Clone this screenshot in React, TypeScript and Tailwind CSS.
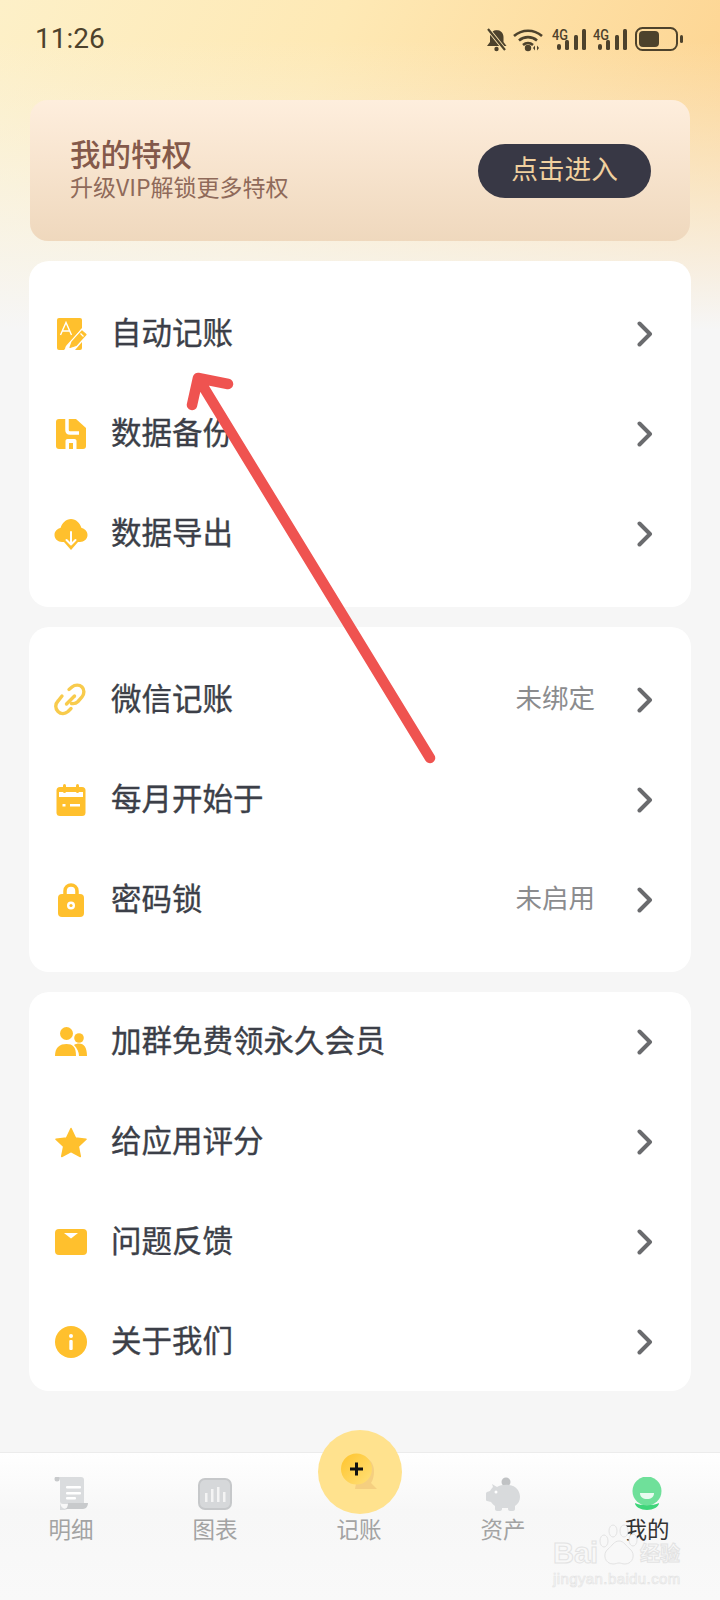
const Y = "#ffc02d";

function Chevron() {
  return (
    <svg width="16" height="26" viewBox="0 0 16 26" className="ml-[42px] mr-[2px] shrink-0">
      <path d="M2.500 2.500 L13 13 L2.500 23.500" fill="none" stroke="#6a6b6e" strokeWidth="4" strokeLinecap="round" strokeLinejoin="round" />
    </svg>
  );
}

const icons: Record<string, React.ReactNode> = {
  auto: (
    <svg width="34" height="34" viewBox="0 0 34 34">
      <path d="M5 1h21q2 0 2 2v8L10 33H5q-2 0-2-2V3q0-2 2-2z" fill={Y} />
      <path d="M21 33l7-8v6q0 2-2 2z" fill={Y} />
      <path d="M6.500 18 L12 5.500 L17.500 18 M8.500 14 h7" stroke="#fff" strokeWidth="1.400" fill="none" />
      <path d="M15.500 31 L30 15" stroke="#fff" strokeWidth="8" strokeLinecap="round" />
      <path d="M16 30.500 L18 25 L28 14 L32 17.500 L22 28.500 Z" fill={Y} stroke={Y} strokeWidth="1.200" strokeLinejoin="round" />
      <path d="M26.500 16.500l3 3" stroke="#fff" strokeWidth="1.200" />
    </svg>
  ),
  save: (
    <svg width="30" height="30" viewBox="0 0 30 30">
      <path d="M3 0h17l10 9v18c0 2-1 3-3 3H3c-2 0-3-1-3-3V3c0-2 1-3 3-3z" fill={Y} />
      <path d="M11 0v11c0 2 1 3 3 3h9" fill="none" stroke="#fff" strokeWidth="3.500" />
      <path d="M9.500 30v-8c0-1 .5-2 2-2h7c1.500 0 2 1 2 2v8z" fill="#fff" />
      <rect x="13" y="24" width="4" height="6" fill={Y} />
    </svg>
  ),
  cloud: (
    <svg width="34" height="32" viewBox="0 0 34 32">
      <path d="M8 24c-4 0-7.500-3-7.500-7s3-6.500 6-7C8 5 12 1 17 1s9 4 10.500 9c3 .5 6 3 6 7s-3.500 7-7.500 7z" fill={Y} />
      <path d="M17 32l-7-8h3V16h8v8h3z" fill={Y} />
      <path d="M17 14v12M12.500 22l4.500 4.500 4.500-4.500" stroke="#fff" strokeWidth="2" fill="none" strokeLinecap="round" strokeLinejoin="round" />
    </svg>
  ),
  link: (
    <svg width="34" height="34" viewBox="0 0 34 34" fill="none" stroke="#f8cb4c" strokeWidth="3.400" strokeLinecap="round">
      <path d="M15 6.500l3-2.500c3-2.500 7.500-2.500 10 0s2.500 7 0 10l-4 4.500c-2 2-4 2.500-6.500 2" />
      <path d="M8 13l-4 5c-3 3-3 7.500 0 10.500s7 2.500 10 0l3-3" />
      <path d="M12.500 21l8-8" />
    </svg>
  ),
  cal: (
    <svg width="30" height="32" viewBox="0 0 30 32">
      <rect x="0.500" y="3" width="29" height="29" rx="3.500" fill={Y} />
      <rect x="3" y="8" width="24" height="5" fill="#fff" />
      <rect x="7" y="0" width="3" height="9" rx="1.500" fill={Y} />
      <rect x="20" y="0" width="3" height="9" rx="1.500" fill={Y} />
      <rect x="6.500" y="20" width="3" height="2.500" fill="#fff" />
      <rect x="14" y="20" width="10" height="2.500" fill="#fff" />
    </svg>
  ),
  lock: (
    <svg width="28" height="34" viewBox="0 0 28 34">
      <path d="M8 13V8c0-8 12-8 12 0v5" fill="none" stroke={Y} strokeWidth="3.500" />
      <rect x="1" y="11" width="26" height="23" rx="4" fill={Y} />
      <circle cx="14" cy="22.500" r="4" fill="#fff" />
      <circle cx="14" cy="22.500" r="1.600" fill={Y} />
    </svg>
  ),
  group: (
    <svg width="32" height="30" viewBox="0 0 32 30">
      <circle cx="11.500" cy="6.500" r="6.500" fill={Y} />
      <circle cx="24" cy="11" r="4.800" fill={Y} />
      <path d="M0 29c0-9 5-12 11.500-12S21 20 21 29z" fill={Y} />
      <path d="M19 18c1.500-1 3-1.500 5-1.500 5 0 8 4 8 12.500h-8c0-4-2-8-5-11z" fill={Y} />
    </svg>
  ),
  star: (
    <svg width="32" height="31" viewBox="0 0 32 31">
      <path d="M16 1.500 L20.500 11 L31 12.300 L23.300 19.500 L25.300 29.500 L16 24.500 L6.700 29.500 L8.700 19.500 L1 12.300 L11.500 11 Z" fill={Y} stroke={Y} strokeWidth="1.500" strokeLinejoin="round" />
    </svg>
  ),
  mail: (
    <svg width="32" height="26" viewBox="0 0 32 26">
      <rect width="32" height="26" rx="4" fill={Y} />
      <path d="M9 4h14l-7 5.500z" fill="#fff" />
    </svg>
  ),
  info: (
    <svg width="32" height="32" viewBox="0 0 32 32">
      <circle cx="16" cy="16" r="16" fill={Y} />
      <circle cx="16" cy="10" r="2" fill="#fff" />
      <rect x="14.300" y="14" width="3.400" height="10" rx="1" fill="#fff" />
    </svg>
  ),
};

function Row({ icon, label, value }: { icon: string; label: string; value?: string }) {
  return (
    <div className="flex h-[100px] items-center pl-[25px] pr-[36px]">
      <div className="flex w-[34px] shrink-0 items-center justify-center">{icons[icon]}</div>
      <span className="ml-[23px] flex-1 pb-[6px] text-[30.500px] leading-none text-[#3c3f48] [-webkit-text-stroke:0.35px_#3c3f48]">{label}</span>
      {value && <span className="pb-[6px] text-[26.500px] leading-none text-[#8b8c8e]">{value}</span>}
      <Chevron />
    </div>
  );
}

function Card({ children, className }: { children: React.ReactNode; className: string }) {
  return <div className={"mx-[29px] rounded-[20px] bg-white " + className}>{children}</div>;
}

function NavItem({ label, icon, active }: { label: string; icon?: React.ReactNode; active?: boolean }) {
  return (
    <div className="flex w-[46px] flex-col items-center">
      <div className="flex h-[34px] items-center justify-center">{icon}</div>
      <span className={"mt-[2px] whitespace-nowrap text-[22.500px] leading-[30px] " + (active ? "text-[#333333]" : "text-[#a3a3a3]")}>{label}</span>
    </div>
  );
}

export default function App() {
  return (
    <div
      className="relative flex h-[1600px] w-[720px] flex-col overflow-hidden bg-[linear-gradient(to_bottom,transparent_40px,#f6f6f6_330px),linear-gradient(115deg,#fdf0c8_0%,#fee9b5_40%,#fdd08a_100%)] bg-[length:100%_100%,100%_330px] bg-no-repeat"
      style={{ fontFamily: '"Noto Sans CJK SC", "Noto Sans", sans-serif' }}
    >
      {/* status bar */}
      <div className="flex h-[78px] items-center justify-between pl-[35px] pr-[35px] text-[#4d422c]">
        <span className="text-[28px] leading-none" style={{ fontFamily: '"Roboto", sans-serif' }}>11:26</span>
        <svg width="200" height="28" viewBox="0 0 200 28" fill="#4d422c">
          <path d="M11.500 5c4 0 7 3 7 7v5l3 4H2l3-4v-5c0-4 3-7 7-7z" />
          <circle cx="11.500" cy="24" r="2.200" />
          <path d="M3 4l17 21" stroke="#fde6ae" strokeWidth="4" />
          <path d="M3 4l17 21" stroke="#4d422c" strokeWidth="2.200" />
          <g fill="none" stroke="#4d422c" strokeWidth="2.600">
            <path d="M29 11c8-7 20-7 28 0" />
            <path d="M34 15.500c5-4.500 13-4.500 18 0" />
            <path d="M38 20c3-2.500 7-2.500 10 0" />
          </g>
          <circle cx="43" cy="23" r="3.200" />
          <path d="M50 20.500l-2 2.500 2 2.500zM52 20.500l2 2.500-2 2.500z" />
          {[0, 41].map((dx) => (
            <g key={dx} transform={`translate(${dx} 0)`}>
              <rect x="72" y="19" width="4" height="6" rx="2" />
              <rect x="80" y="15" width="4" height="10" rx="1.500" />
              <rect x="89" y="10" width="4" height="15" rx="1.500" />
              <rect x="97" y="4" width="4" height="21" rx="1.500" />
              <text x="67" y="15" fontSize="14" fontWeight="500" fontFamily="Roboto, sans-serif" fill="#4d422c" textLength="16" lengthAdjust="spacingAndGlyphs">4G</text>
            </g>
          ))}
          <rect x="151" y="3" width="41" height="22" rx="6.500" fill="none" stroke="#4d422c" strokeWidth="2" />
          <rect x="154" y="6" width="20" height="16" rx="4" />
          <rect x="195" y="10" width="3" height="8" rx="1.500" />
        </svg>
      </div>

      {/* privilege banner */}
      <div className="mx-[30px] mt-[22px] flex h-[141px] items-center justify-between rounded-[18px] bg-[linear-gradient(to_bottom,#feeedd,#efd8bd)] pl-[40px] pr-[39px]">
        <div className="flex flex-col pb-[3px]">
          <span className="text-[30.500px] font-medium leading-[35px] text-[#84594a]">我的特权</span>
          <span className="text-[23px] leading-[31px] text-[#8f6a5a]">升级VIP解锁更多特权</span>
        </div>
        <div className="flex h-[54px] w-[173px] items-center justify-center rounded-full bg-[#383845] pb-[4px] text-[26.700px] leading-none text-[#f0d09f]">点击进入</div>
      </div>

      <Card className="mt-[20px] h-[346px] py-[23px]">
        <Row icon="auto" label="自动记账" />
        <Row icon="save" label="数据备份" />
        <Row icon="cloud" label="数据导出" />
      </Card>
      <Card className="mt-[20px] h-[345px] py-[23px]">
        <Row icon="link" label="微信记账" value="未绑定" />
        <Row icon="cal" label="每月开始于" />
        <Row icon="lock" label="密码锁" value="未启用" />
      </Card>
      <Card className="mt-[20px] h-[399px]">
        <Row icon="group" label="加群免费领永久会员" />
        <Row icon="star" label="给应用评分" />
        <Row icon="mail" label="问题反馈" />
        <Row icon="info" label="关于我们" />
      </Card>

      {/* bottom nav */}
      <div className="mt-[61px] flex flex-1 items-start gap-[98px] border-t border-[#ececec] bg-[linear-gradient(to_bottom,#ffffff,#f7f7f7_40%,#f9f9f9)] pl-[48px] pt-[24px]">
        <NavItem
          label="明细"
          icon={
            <svg width="34" height="34" viewBox="0 0 34 34">
              <path d="M2 0h25c2 0 3 1 3 3v24H9c-2 0-3-1-3-3V4C6 2 4 0 2 0z" fill="#dadcde" />
              <path d="M6 33c-0 0 0-1 0-9 0 3 1 6 3 7 4 2 4 2 6 2z" fill="#dadcde" />
              <circle cx="3" cy="2" r="2.500" fill="#c8cacc" />
              <path d="M14 26h20c0 3-2 6-5 6H10c3 0 4-3 4-6z" fill="#c8cacc" />
              <rect x="12" y="9" width="15" height="2.500" rx="1" fill="#fff" />
              <rect x="12" y="15" width="15" height="2.500" rx="1" fill="#fff" />
              <rect x="12" y="20" width="10" height="2.500" rx="1" fill="#fff" />
            </svg>
          }
        />
        <NavItem
          label="图表"
          icon={
            <svg width="34" height="32" viewBox="0 0 34 32">
              <rect x="1" y="1" width="32" height="30" rx="6" fill="#d6d8da" stroke="#c6c8ca" strokeWidth="2" />
              <rect x="7" y="15" width="2.500" height="9" fill="#f4f4f4" />
              <rect x="13" y="11" width="2.500" height="13" fill="#f4f4f4" />
              <rect x="19" y="9" width="2.500" height="15" fill="#f4f4f4" />
              <rect x="25" y="14" width="2.500" height="10" fill="#f4f4f4" />
            </svg>
          }
        />
        <NavItem label="记账" />
        <NavItem
          label="资产"
          icon={
            <svg width="36" height="34" viewBox="0 0 36 34">
              <circle cx="21" cy="5" r="4.500" fill="#c0c2c4" />
              <path d="M7 7l5 3c3-2 8-2.500 12-2 7 .5 11 6 11 12 0 4-2 7-5 9v3c0 1-1 2-2 2h-3c-1 0-2-1-2-2v-1h-6v1c0 1-1 2-2 2h-3c-1 0-2-1-2-2v-3c-2-1-3-3-4-4l-4-1c-1 0-1-1-1-2v-5c0-1 0-1 1-2l3-1c1-2 2-3 3-4z" fill="#d8dadc" />
              <circle cx="11" cy="15" r="1.500" fill="#fff" />
            </svg>
          }
        />
        <NavItem
          label="我的"
          active
          icon={
            <svg width="30" height="34" viewBox="0 0 30 34">
              <circle cx="15" cy="14" r="14.500" fill="#6fe09a" />
              <path d="M8 16h14c0 4-3 6-7 6s-7-2-7-6z" fill="#e8fbef" />
              <path d="M3 26c6 3 18 3 24 0 0 4-6 7-12 7S3 30 3 26z" fill="#3fd57a" />
            </svg>
          }
        />
      </div>

      {/* centre action button */}
      <div className="absolute left-[318px] top-[1430px] flex h-[84px] w-[84px] items-center justify-center rounded-full bg-[#ffe28e]">
        <svg width="38" height="38" viewBox="0 0 38 38">
          <defs>
            <linearGradient id="bubble" x1="0" y1="0" x2="1" y2="1">
              <stop offset="0" stopColor="#ffc42c" />
              <stop offset="1" stopColor="#ffe07a" />
            </linearGradient>
          </defs>
          <path d="M20 4c8 0 13 6 13 14 0 5-1 9-3 12l6 6H14z" fill="#f5cf80" />
          <circle cx="15.500" cy="16" r="15.500" fill="url(#bubble)" />
          <path d="M15.500 9.500v13M9 16h13" stroke="#111" strokeWidth="3" />
        </svg>
      </div>

      {/* red annotation arrow */}
      <svg width="720" height="1600" className="pointer-events-none absolute left-0 top-0">
        <path d="M430 758 L198 378 M228 384 L198 378 L192 405" fill="none" stroke="#ef5350" strokeWidth="10.500" strokeLinecap="round" strokeLinejoin="round" />
      </svg>

      {/* watermark */}
      <div className="pointer-events-none absolute left-[553px] top-[1522px] flex w-[127px] flex-col text-[#f8f8f8] [-webkit-text-stroke:1px_#e3e3e3]">
        <div className="flex h-[44px] items-end justify-between">
          <span className="text-[29px] font-bold leading-[26px]" style={{ fontFamily: '"Liberation Sans", sans-serif' }}>Bai</span>
          <svg width="40" height="42" viewBox="0 0 40 42" fill="#f8f8f8" stroke="#e3e3e3" strokeWidth="1" className="shrink-0">
            <ellipse cx="5" cy="17" rx="4" ry="6" />
            <ellipse cx="14" cy="7" rx="4" ry="6" />
            <ellipse cx="25" cy="7" rx="4" ry="6" />
            <ellipse cx="34" cy="16" rx="4" ry="6" />
            <path d="M20 17c5 0 7 5 11 8 6 5 3 15-5 15-3 0-4-1-6-1s-3 1-6 1c-8 0-11-10-5-15 4-3 6-8 11-8z" />
          </svg>
          <span className="text-[20px] font-bold leading-[26px]">经验</span>
        </div>
        <span className="mt-[5px] whitespace-nowrap text-[15px] leading-[15px] tracking-[0.4px] [-webkit-text-stroke:0.6px_#e3e3e3]" style={{ fontFamily: '"Liberation Sans", sans-serif' }}>jingyan.baidu.com</span>
      </div>
    </div>
  );
}
